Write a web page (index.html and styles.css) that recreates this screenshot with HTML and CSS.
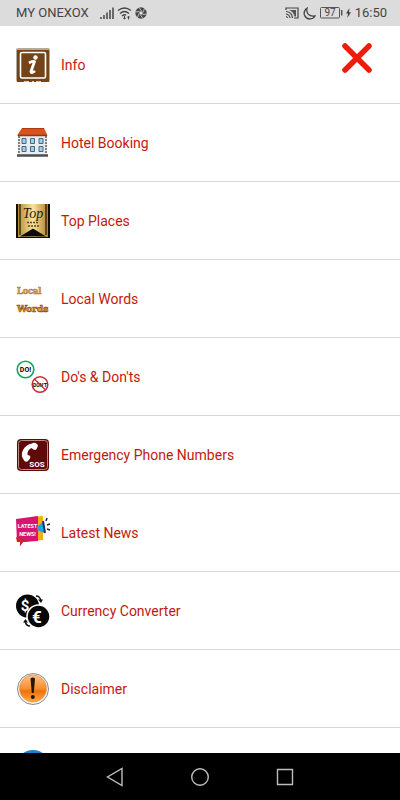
FILE: index.html
```html
<!DOCTYPE html>
<html lang="en">
<head>
  <meta charset="UTF-8">
  <meta name="viewport" content="width=device-width, initial-scale=1.0">
  <title>Menu</title>
  <link rel="stylesheet" href="styles.css">
</head>
<body>

<!-- Status bar -->
<header class="status-bar">
  <span class="carrier">MY ONEXOX</span>
  <svg class="signal" width="14" height="14" viewBox="0 0 14 14">
    <path d="M1 11v2M4 9v4M7 6.500v6.500M10 4v9M13 1.500v11.500" stroke="#444" stroke-width="1.500"/>
  </svg>
  <svg class="wifi" width="15" height="14" viewBox="0 0 15 14" fill="none" stroke="#444" stroke-width="1.300">
    <path d="M1 4.500Q7.500-.5 14 4.500M3 7.500Q7.500 3.500 12 7.500M5 10Q7.500 8 9 9.200"/>
    <path d="M7.500 10v3M6.300 11.800l1.200 1.400 1.200-1.400M11.500 13.500v-3M10.300 11.500l1.200-1.400 1.200 1.400" stroke-width="1"/>
  </svg>
  <svg width="12" height="12" viewBox="0 0 12 12">
    <circle cx="6" cy="6" r="5.700" fill="#484848"/>
    <path d="M4 .5l2.500 3.500M9.500 1.500L8 5.500M11.700 7L7.600 7.600M8 11.500L5.500 8M2.500 10.500L4 6.500M.3 5l4.100-.6" stroke="#dcdcdc" stroke-width=".8"/>
    <circle cx="6" cy="6" r="1.800" fill="#dcdcdc"/>
  </svg>
  <div class="status-right">
    <svg width="14" height="12" viewBox="0 0 14 12" fill="none" stroke="#444" stroke-width="1.200">
      <path d="M1 3V1h12v10h-4"/>
      <path d="M1 4.500q6 .5 6.500 6.500M1 7q3.500.5 4 4M1 9.500q1.300.3 1.500 1.500"/>
      <path d="M4 3h7v6.500H9.500Q8.500 4.500 4 3z" fill="#555" stroke="none"/>
    </svg>
    <svg width="13" height="13" viewBox="0 0 13 13" fill="none" stroke="#444" stroke-width="1.300">
      <path d="M4 1.200Q.5 3.500 1.300 7.500 2.500 11.500 6.500 12 10.300 12 12 9 7.500 9.800 5 6.800 3.200 4 4 1.200z"/>
    </svg>
    <svg width="23" height="12" viewBox="0 0 23 12">
      <rect x=".5" y=".5" width="19" height="10.500" rx="1" fill="none" stroke="#555"/>
      <path d="M21.700 3v5.500" stroke="#555" stroke-width="1.500"/>
      <text x="10" y="9.300" font-size="10" text-anchor="middle" fill="#444">97</text>
    </svg>
    <svg class="bolt" width="5" height="10" viewBox="0 0 5 10"><path d="M3.500 0L0 5.500h2L1.300 10 5 4.200H3z" fill="#444"/></svg>
    <time>16:50</time>
  </div>
</header>

<!-- Menu -->
<main class="menu">
  <button class="close" type="button" aria-label="Close">
    <svg width="32" height="32" viewBox="0 0 32 32">
      <path d="M4 4l24 24M28 4L4 28" stroke="#ee1c0c" stroke-width="5.500" stroke-linecap="round"/>
    </svg>
  </button>

  <nav>
    <a class="item" href="#info">
      <svg class="icon" viewBox="0 0 34 34">
        <rect width="34" height="34" rx="2" fill="#b3aa9c"/>
        <path d="M1 2h32v32H1z" fill="#754316"/>
        <rect x="4.500" y="4.500" width="25" height="25.500" rx="1.500" fill="none" stroke="#fff" stroke-width="1.600"/>
        <circle cx="19.500" cy="9.500" r="2.200" fill="#fff"/>
        <path d="M13 15q3-2 5.500-1.500L15 23.500q0 2.500 4-.5" fill="none" stroke="#fff" stroke-width="2.800" stroke-linejoin="round"/>
        <path d="M8 33.500h5M16 33.500h2M20 33.500h5" stroke="#d9c9b7"/>
      </svg>
      <span>Info</span>
    </a>

    <a class="item" href="#hotel">
      <svg class="icon" viewBox="0 0 34 34">
        <path d="M2 9h29v21H2z" fill="#e9edf2"/>
        <path d="M3 10v18M30 10v18" stroke="#84827f" stroke-width="2" stroke-dasharray="2 1"/>
        <path d="M6 2h22l3.500 7.500H1z" fill="#d9531b"/>
        <path d="M6 2.500h22" stroke="#ad3a17"/>
        <path d="M2 9.500h29" stroke="#8a3b1b" stroke-width="1.500"/>
        <path d="M6 12.500h4v5H6zM14.500 12.500h4v5h-4zM23 12.500h4v5h-4zM6 20.500h4v5H6zM14.500 20.500h4v5h-4zM23 20.500h4v5h-4z" fill="#9fd0ea" stroke="#4a6580"/>
        <path d="M1 29.500h31" stroke="#4b4f55" stroke-width="2.500"/>
      </svg>
      <span>Hotel Booking</span>
    </a>

    <a class="item" href="#places">
      <svg class="icon" viewBox="0 0 34 34">
        <defs>
          <linearGradient id="gold">
            <stop offset="0" stop-color="#b98a35"/>
            <stop offset=".5" stop-color="#f8e49c"/>
            <stop offset="1" stop-color="#b37d2b"/>
          </linearGradient>
        </defs>
        <path d="M0 0h34v34H0z" fill="#100b06"/>
        <path d="M2 0h30v33H2z" fill="url(#gold)"/>
        <path d="M4 0v31M30 0v31" stroke="#21170b" stroke-width="1.200"/>
        <path d="M4 32.500l13-8 13 8z" fill="#100b06"/>
        <text x="17" y="14" class="script" font-size="14" text-anchor="middle" fill="#241a0c">Top</text>
        <path d="M11 18.500h12M12 22h11" stroke="#5e451e" stroke-width="1.300" stroke-dasharray="2 1"/>
      </svg>
      <span>Top Places</span>
    </a>

    <a class="item" href="#words">
      <svg class="icon" viewBox="0 0 34 34">
        <g class="slab" stroke-width=".7">
          <text x="1" y="12" font-size="9" fill="#f4b964" stroke="#b57c45">Local</text>
          <text x="1" y="30" font-size="10" fill="#f79a22" stroke="#8b541e">Words</text>
        </g>
      </svg>
      <span>Local Words</span>
    </a>

    <a class="item" href="#dos">
      <svg class="icon" viewBox="0 0 34 34">
        <circle cx="9.500" cy="9.500" r="8.300" fill="#fff" stroke="#16a362" stroke-width="1.600"/>
        <text x="9.500" y="12.300" class="bold" font-size="7" text-anchor="middle">DO!</text>
        <circle cx="24" cy="24.500" r="7.800" fill="#fff" stroke="#c32c3b" stroke-width="1.500"/>
        <text x="24" y="26.500" class="bold" font-size="5" text-anchor="middle">DON'T</text>
        <path d="M18.500 19l11 11" stroke="#c32c3b" stroke-width="1.300"/>
      </svg>
      <span>Do's &amp; Don'ts</span>
    </a>

    <a class="item" href="#emergency">
      <svg class="icon" viewBox="0 0 34 34">
        <rect x="1" y="1" width="32" height="32" rx="4" fill="#600909"/>
        <rect x="2.500" y="2.500" width="29" height="29" rx="3" fill="none" stroke="#c59a9a" stroke-width=".9"/>
        <path d="M16 5.500Q18 4 21 6q1.500 1 .5 3l-1 2q-1 1.500-3 .5l-2-1.500Q11 12 11.500 17l2 .5q1.500 1 .5 3l-2 2.500q-1.500 1.500-3.500 0Q4 18 7 12 10 6.500 16 5.500z" fill="#fff"/>
        <text x="21" y="29" class="bold" font-size="8" text-anchor="middle" fill="#fff">SOS</text>
      </svg>
      <span>Emergency Phone Numbers</span>
    </a>

    <a class="item" href="#news">
      <svg class="icon" viewBox="0 0 34 34">
        <path d="M16 1l11-1v24l-11 1z" fill="#f7ad18"/>
        <path d="M0 3l22-3v25L7 26l-3 4v-4H1z" fill="#d71472"/>
        <path d="M0 21l1 5h3v4l3-4 6-.5z" fill="#cf222d"/>
        <path d="M21 11l7-6v12l-7-3z" fill="#17a7dc"/>
        <path d="M27 5l2 12" stroke="#1e2d68" stroke-width="2"/>
        <path d="M30 5l1-3M31 9l3-1M31 13l3 1" stroke="#222" stroke-width="1.500"/>
        <g class="bold" fill="#fff" text-anchor="middle" font-size="6">
          <text x="11.500" y="12" font-size="5.500">LATEST</text>
          <text x="11.500" y="20" font-size="5.500">NEWS!</text>
        </g>
      </svg>
      <span>Latest News</span>
    </a>

    <a class="item" href="#currency">
      <svg class="icon" viewBox="0 0 34 34">
        <circle cx="11.500" cy="12" r="11.500" fill="#070707"/>
        <text x="9" y="17" class="bold" font-size="15" text-anchor="middle" fill="#fff">$</text>
        <circle cx="22.500" cy="22.500" r="11.500" fill="#070707" stroke="#fff" stroke-width="1.500"/>
        <text x="21" y="28.500" class="bold" font-size="17" text-anchor="middle" fill="#fff">€</text>
        <path d="M20 2q4 0 5 5M14 32q-4 0-5-5" fill="none" stroke="#111" stroke-width="1.400"/>
        <path d="M22 5.500h5L25 9zM7 28.500h5L9.500 25z" fill="#111"/>
      </svg>
      <span>Currency Converter</span>
    </a>

    <a class="item" href="#disclaimer">
      <svg class="icon" viewBox="0 0 34 34">
        <defs>
          <linearGradient id="orange" x2="0" y2="1">
            <stop offset="0" stop-color="#fbc18c"/>
            <stop offset=".5" stop-color="#f88f2b"/>
            <stop offset=".6" stop-color="#f2700b"/>
            <stop offset="1" stop-color="#ffad42"/>
          </linearGradient>
        </defs>
        <circle cx="17" cy="17" r="15.500" fill="#f7f5f0" stroke="#8b8b86"/>
        <circle cx="17" cy="16.500" r="13.500" fill="url(#orange)" stroke="#e48c45" stroke-width=".7"/>
        <path d="M14.500 6.500q2.500-2 4.500 0L17.800 21h-2z" fill="#25150b"/>
        <circle cx="16.800" cy="25" r="2" fill="#25150b"/>
      </svg>
      <span>Disclaimer</span>
    </a>

    <a class="item" href="#more" aria-label="More">
      <svg class="icon" viewBox="0 0 34 34"><circle cx="17" cy="17" r="17" fill="#1c82cc"/></svg>
    </a>
  </nav>
</main>

<!-- Android navigation -->
<footer class="nav-bar">
  <button type="button" aria-label="Back">
    <svg width="18" height="20" viewBox="0 0 18 20"><path d="M16 1.500v17L1.500 10z"/></svg>
  </button>
  <button type="button" aria-label="Home">
    <svg width="18" height="20" viewBox="0 0 18 20"><circle cx="9" cy="10" r="8.300"/></svg>
  </button>
  <button type="button" aria-label="Recent apps">
    <svg width="18" height="20" viewBox="0 0 18 20"><path d="M1.500 2.500h15v15h-15z"/></svg>
  </button>
</footer>

</body>
</html>
```
FILE: styles.css
```css
* {
  box-sizing: border-box;
}
body {
  margin: 0;
  height: 100vh;
  display: flex;
  flex-direction: column;
  overflow: hidden;
  font-family: Roboto, sans-serif;
  background-color: #fff;
}
svg {
  display: block;
  flex: none;
}
button {
  padding: 0;
  border: none;
  background: none;
  cursor: pointer;
}

/* Status bar */
.status-bar {
  display: flex;
  align-items: center;
  flex: none;
  gap: 3px;
  padding: 0 13px 0 16px;
  background-color: #dcdcdc;
  color: #444;
  font-size: 13px;
  line-height: 26px;
}
.signal {
  margin-left: 8px;
}
.status-right {
  display: flex;
  align-items: center;
  gap: 4px;
  margin-left: auto;
}
.bolt {
  margin-left: -1px;
}

/* Menu list */
.menu {
  position: relative;
  flex: 1;
  min-height: 0;
  overflow: hidden;
}
.item {
  display: flex;
  align-items: center;
  gap: 11px;
  height: 78px;
  padding: 0 16px;
  border-bottom: 1px solid #d8d8d8;
  color: #c4190d;
  font-size: 14px;
  text-decoration: none;
}
.icon {
  width: 34px;
  height: 34px;
}
.close {
  position: absolute;
  top: 16px;
  right: 27px;
}

/* Lettering inside the icons */
.script {
  font-family: "Liberation Serif", serif;
  font-style: italic;
}
.slab {
  font-family: "DejaVu Serif Condensed", "DejaVu Serif", serif;
  font-weight: bold;
}
.bold {
  font-weight: bold;
}

/* Bottom buttons */
.nav-bar {
  display: flex;
  justify-content: center;
  align-items: center;
  flex: none;
  gap: 67px;
  height: 47px;
  background-color: #000;
}
.nav-bar svg {
  fill: none;
  stroke: #bdbdbd;
  stroke-width: 1.4;
}
```
